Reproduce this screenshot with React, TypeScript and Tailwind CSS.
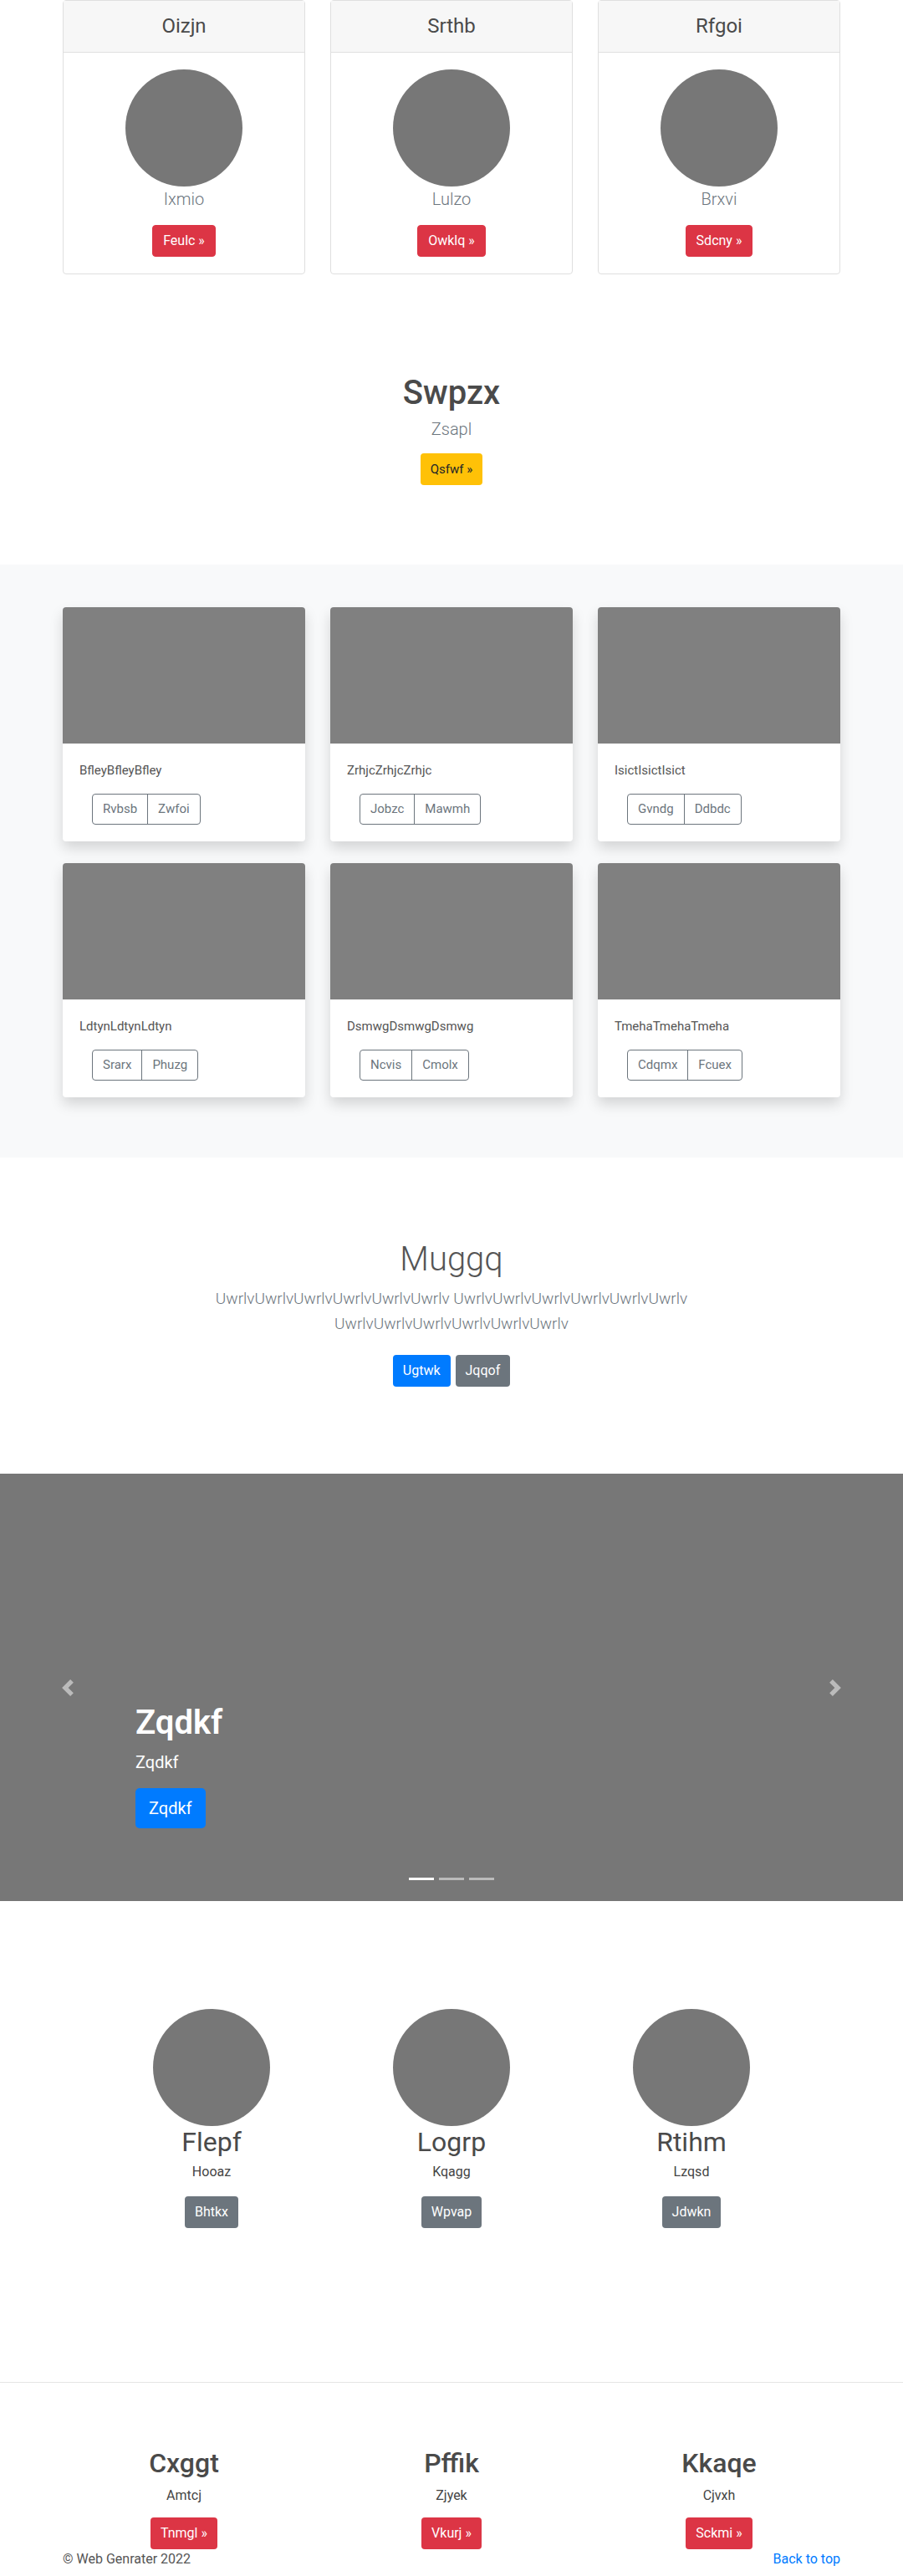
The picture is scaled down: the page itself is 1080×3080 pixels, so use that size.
import React from 'react';

const pricing = [
  { title: 'Oizjn', sub: 'Ixmio', btn: 'Feulc »' },
  { title: 'Srthb', sub: 'Lulzo', btn: 'Owklq »' },
  { title: 'Rfgoi', sub: 'Brxvi', btn: 'Sdcny »' },
];

const album = [
  { text: 'BfleyBfleyBfley', a: 'Rvbsb', b: 'Zwfoi' },
  { text: 'ZrhjcZrhjcZrhjc', a: 'Jobzc', b: 'Mawmh' },
  { text: 'IsictIsictIsict', a: 'Gvndg', b: 'Ddbdc' },
  { text: 'LdtynLdtynLdtyn', a: 'Srarx', b: 'Phuzg' },
  { text: 'DsmwgDsmwgDsmwg', a: 'Ncvis', b: 'Cmolx' },
  { text: 'TmehaTmehaTmeha', a: 'Cdqmx', b: 'Fcuex' },
];

const marketing = [
  { title: 'Flepf', sub: 'Hooaz', btn: 'Bhtkx' },
  { title: 'Logrp', sub: 'Kqagg', btn: 'Wpvap' },
  { title: 'Rtihm', sub: 'Lzqsd', btn: 'Jdwkn' },
];

const features = [
  { title: 'Cxggt', sub: 'Amtcj', btn: 'Tnmgl »' },
  { title: 'Pffik', sub: 'Zjyek', btn: 'Vkurj »' },
  { title: 'Kkaqe', sub: 'Cjvxh', btn: 'Sckmi »' },
];

const lead = 'UwrlvUwrlvUwrlvUwrlvUwrlvUwrlv';

const Chevron = ({ dir }: { dir: 'left' | 'right' }) => (
  <svg width="20" height="20" viewBox="0 0 8 8" fill="#fff" className="opacity-50">
    {dir === 'left' ? (
      <path d="M5.25 0l-4 4 4 4 1.5-1.5L4.25 4l2.5-2.5L5.25 0z" />
    ) : (
      <path d="M2.75 0l-1.5 1.5L3.75 4l-2.5 2.5L2.75 8l4-4-4-4z" />
    )}
  </svg>
);

export default function App() {
  return (
    <div className="bg-white font-[Roboto,'Liberation_Sans',sans-serif] text-[#4a4a4a]">
      {/* pricing cards */}
      <div className="w-[930px] mx-auto grid grid-cols-3 gap-[30px]">
        {pricing.map((p) => (
          <div key={p.title} className="border border-[#dfdfdf] rounded-[4px] text-center">
            <div className="h-[62px] bg-[#f7f7f7] border-b border-[#dfdfdf] flex items-center justify-center">
              <h4 className="text-[24px] leading-[29px] text-[#4a4a4a]">{p.title}</h4>
            </div>
            <div className="pt-5 pb-5 flex flex-col items-center">
              <div className="w-[140px] h-[140px] rounded-full bg-[#777]" />
              <p className="text-[20px] leading-[30px] font-light text-[#6c757d] mb-4">{p.sub}</p>
              <button className="bg-[#dc3545] text-white text-[16px] leading-6 py-[6px] px-3 rounded-[4px] border border-[#dc3545]">
                {p.btn}
              </button>
            </div>
          </div>
        ))}
      </div>

      {/* hero */}
      <div className="pt-[118px] pb-[95px] text-center flex flex-col items-center">
        <h1 className="text-[40px] leading-[48px] font-medium text-[#4a4a4a] mb-[4px]">Swpzx</h1>
        <p className="text-[20px] leading-[30px] font-light text-[#6c757d] mb-[14px]">Zsapl</p>
        <button className="bg-[#ffc107] text-[#212529] text-[15px] leading-6 py-[7px] px-3 rounded-[4px]">
          Qsfwf »
        </button>
      </div>

      {/* album */}
      <div className="bg-[#f8f9fa] pt-[51px] pb-[72px]">
        <div className="w-[930px] mx-auto grid grid-cols-3 gap-x-[30px] gap-y-[26px]">
          {album.map((c) => (
            <div key={c.text} className="bg-white rounded-[4px] overflow-hidden shadow-[0_8px_16px_rgba(0,0,0,0.15)]">
              <div className="h-[163px] bg-[#808080]" />
              <div className="p-5">
                <p className="text-[15px] leading-6 text-[#555] mb-4">{c.text}</p>
                <div className="ml-[15px] inline-flex rounded-[4px] border border-[#6c757d] text-[#6c757d] text-[15px] leading-[21px]">
                  <span className="px-3 py-[7px] border-r border-[#6c757d]">{c.a}</span>
                  <span className="px-3 py-[7px]">{c.b}</span>
                </div>
              </div>
            </div>
          ))}
        </div>
      </div>

      {/* jumbotron */}
      <div className="pt-[98px] pb-[104px] text-center flex flex-col items-center">
        <h1 className="text-[40px] leading-[48px] font-light text-[#555] mb-[8px]">Muggq</h1>
        <p className="max-w-[640px] text-[19px] leading-[30px] font-light text-[#6c757d] mb-[22px]">
          {lead} {lead} {lead}
        </p>
        <div className="flex gap-[6px]">
          <button className="bg-[#007bff] text-white text-[16px] leading-6 py-[7px] px-3 rounded-[4px]">Ugtwk</button>
          <button className="bg-[#6c757d] text-white text-[16px] leading-6 py-[7px] px-3 rounded-[4px]">Jqqof</button>
        </div>
      </div>

      {/* carousel */}
      <div className="relative h-[511px] bg-[#777] flex flex-col justify-end px-[15%] pb-[87px] text-white">
        <div className="absolute left-0 top-0 bottom-0 w-[15%] flex items-center justify-center">
          <Chevron dir="left" />
        </div>
        <div className="absolute right-0 top-0 bottom-0 w-[15%] flex items-center justify-center">
          <Chevron dir="right" />
        </div>
        <h1 className="text-[40px] leading-[48px] font-semibold mb-2">Zqdkf</h1>
        <p className="text-[20px] leading-[30px] mb-4">Zqdkf</p>
        <div>
          <button className="bg-[#007bff] text-white text-[20px] leading-[30px] py-[9px] px-4 rounded-[5px]">Zqdkf</button>
        </div>
        <div className="absolute bottom-[25px] left-0 right-0 flex justify-center">
          <span className="w-[30px] h-[3px] mx-[3px] bg-white" />
          <span className="w-[30px] h-[3px] mx-[3px] bg-white/50" />
          <span className="w-[30px] h-[3px] mx-[3px] bg-white/50" />
        </div>
      </div>

      {/* marketing */}
      <div className="pt-[129px] w-[861px] mx-auto grid grid-cols-3 text-center">
        {marketing.map((m) => (
          <div key={m.title} className="flex flex-col items-center">
            <div className="w-[140px] h-[140px] rounded-full bg-[#777]" />
            <h2 className="text-[32px] leading-[38px] font-normal text-[#4a4a4a] mb-[5px]">{m.title}</h2>
            <p className="text-[16px] leading-6 text-[#444] mb-[17px]">{m.sub}</p>
            <button className="bg-[#6c757d] text-white text-[16px] leading-6 py-[7px] px-3 rounded-[4px]">{m.btn}</button>
          </div>
        ))}
      </div>

      <hr className="mt-[184px] border-0 border-t border-[#e5e5e5]" />

      {/* features */}
      <div className="pt-[77px] w-[960px] mx-auto grid grid-cols-3 text-center">
        {features.map((f) => (
          <div key={f.title} className="flex flex-col items-center">
            <h2 className="text-[32px] leading-[38px] font-medium text-[#4a4a4a] mb-2">{f.title}</h2>
            <p className="text-[16px] leading-6 text-[#444] mb-[14px]">{f.sub}</p>
            <button className="bg-[#dc3545] text-white text-[16px] leading-6 py-[7px] px-3 rounded-[4px]">{f.btn}</button>
          </div>
        ))}
      </div>

      <footer className="w-[930px] mx-auto flex justify-between text-[16px] leading-6 pb-8">
        <p className="text-[#555]">© Web Genrater 2022</p>
        <a href="#" className="text-[#007bff]">Back to top</a>
      </footer>
    </div>
  );
}
